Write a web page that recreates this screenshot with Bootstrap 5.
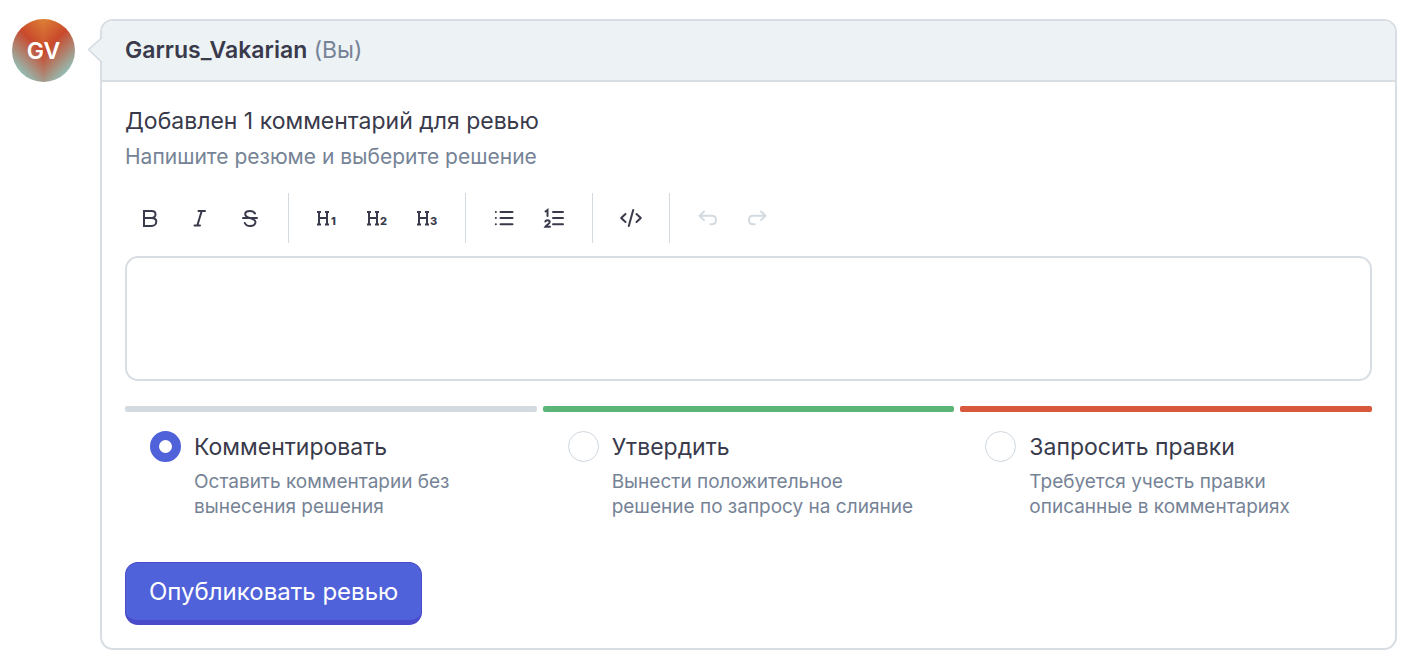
<!DOCTYPE html>
<html lang="ru">
<head>
<meta charset="utf-8">
<meta name="viewport" content="width=device-width, initial-scale=1">
<title>Ревью</title>
<link href="https://cdn.jsdelivr.net/npm/bootstrap@5.3.0/dist/css/bootstrap.min.css" rel="stylesheet">
<style>
  :root { --ink: #393a4b; --muted: #768396; --line: #d3dae0; --edge: #d8dee3; --head: #edf2f5; --accent: #5062d9; --accent-dark: #4a4bcb; }
  body { font-family: Inter, "Open Sans", sans-serif; color: var(--ink); background: #fff; font-size: 23px; line-height: 32px; }
  .review { padding: 19px 11px 16px 12px; gap: 25px; }
  .avatar { width: 63px; height: 63px; font-weight: 600; color: #fff;
    background: linear-gradient(225deg, #dd8136 0%, #c9492c 36%, #8ccfc9 88%) left / 32px 100% no-repeat,
                linear-gradient(135deg, #dd8136 0%, #c9492c 36%, #8ccfc9 88%) right / 32px 100% no-repeat; }
  .review-card { border: 2px solid var(--edge); border-radius: 13px; min-width: 0; }
  .review-head { background: var(--head); border-bottom: 2px solid var(--edge); border-radius: 11px 11px 0 0; padding: 13px 23px 14px; }
  .pointer { left: -15px; top: 16px; }
  .review-body { padding: 23px 23px 23px; }
  .review-title { font-size: inherit; line-height: inherit; }
  .text-quiet { color: var(--muted); }
  .hint { font-size: 21px; line-height: 32px; }
  .tools { margin-top: 20px; margin-bottom: 13px; }
  .tool { width: 50px; height: 50px; color: var(--ink); background: none; border: 0; padding: 0; }
  .tool:disabled { color: var(--line); }
  .tool svg { display: block; margin: 0 auto; }
  .tool-sep { width: 1px; height: 50px; margin: 0 13px; background: var(--line); }
  .tool text { font: 800 11px Inter, sans-serif; fill: currentColor; stroke: none; }
  .editor { height: 125px; border: 2px solid var(--edge); border-radius: 13px; resize: none; }
  .choices { display: grid; grid-template-columns: repeat(3, minmax(0, 1fr)); gap: 6px; margin-top: 25px; }
  .choice { padding: 19px 36px 0 25px; gap: 13px; }
  .bar { height: 6px; border-radius: 2px; }
  .bar-neutral { background: var(--line); }
  .bar-good { background: #5cb578; }
  .bar-bad { background: #d8583c; }
  .choice .form-check-input { width: 31px; height: 31px; margin: 0; border: 1px solid #cfd7df; }
  .choice .form-check-input:checked { background: #fff; border: 9px solid var(--accent); }
  .choice-note { font-size: 19px; line-height: 25px; margin-top: 6px; }
  .publish, .publish:hover { color: #fff; background: var(--accent); border: 1px solid var(--accent-dark); border-bottom-width: 5px; }
  .publish { margin-top: 43px; border-radius: 13px; font-size: 24px; line-height: 32px; padding: 13px 23px 12px; }
</style>
</head>
<body>
<main class="review d-flex align-items-start">
  <div class="avatar rounded-circle flex-shrink-0 d-flex align-items-center justify-content-center">GV</div>
  <form class="review-card flex-grow-1 position-relative">
    <svg class="pointer position-absolute" width="16" height="28" viewBox="0 0 16 28" fill="#edf2f5" stroke="#d3dae0" stroke-width="1.5" aria-hidden="true"><path d="M15 0.500 1.500 12.500 15 25.500"/></svg>
    <header class="review-head"><strong class="fw-semibold">Garrus_Vakarian</strong> <span class="text-quiet">(Вы)</span></header>
    <div class="review-body">
      <h1 class="review-title fw-normal m-0">Добавлен 1 комментарий для ревью</h1>
      <p class="hint text-quiet mb-0 mt-1">Напишите резюме и выберите решение</p>
      <div class="tools d-flex flex-wrap" role="toolbar" aria-label="Форматирование">
        <button class="tool" type="button" aria-label="Полужирный"><svg width="32" height="32" viewBox="0 0 32 32" fill="none" stroke="currentColor" stroke-width="2"><path d="M10 9H17.500C20 9 21.500 10.300 21.500 12.300S20 16 17.500 16H10M17.500 16C20.500 16 22.300 17.200 22.300 19.500S20.500 24 17.500 24H10V8"/></svg></button>
        <button class="tool" type="button" aria-label="Курсив"><svg width="32" height="32" viewBox="0 0 32 32" fill="none" stroke="currentColor" stroke-width="2" stroke-linecap="round"><path d="M14.500 9H21M10.500 23.500h5.500M17.700 9 13.300 23.500"/></svg></button>
        <button class="tool" type="button" aria-label="Зачёркнутый"><svg width="32" height="32" viewBox="0 0 32 32" fill="none" stroke="currentColor" stroke-width="2" stroke-linecap="round"><path d="M21 11.500C20 9.800 18.300 9 16 9c-3 0-4.800 1.300-4.800 3.200 0 2 1.800 3 4.800 3.800 3.500.9 5.500 1.900 5.500 4.100S19.300 24 16.200 24c-2.600 0-4.600-1-5.400-3M9 16h14"/></svg></button>
        <div class="tool-sep"></div>
        <button class="tool" type="button" aria-label="Заголовок 1"><svg width="32" height="32" viewBox="0 0 32 32" fill="none" stroke="currentColor" stroke-width="2"><path d="M8 10v13M16 10v13M8 16h8M6 10h4M14 10h4M6 22.500h4M14 22.500h4"/><text x="20" y="23">1</text></svg></button>
        <button class="tool" type="button" aria-label="Заголовок 2"><svg width="32" height="32" viewBox="0 0 32 32" fill="none" stroke="currentColor" stroke-width="2"><path d="M8 10v13M16 10v13M8 16h8M6 10h4M14 10h4M6 22.500h4M14 22.500h4"/><text x="19" y="23">2</text></svg></button>
        <button class="tool" type="button" aria-label="Заголовок 3"><svg width="32" height="32" viewBox="0 0 32 32" fill="none" stroke="currentColor" stroke-width="2"><path d="M8 10v13M16 10v13M8 16h8M6 10h4M14 10h4M6 22.500h4M14 22.500h4"/><text x="19" y="23">3</text></svg></button>
        <div class="tool-sep"></div>
        <button class="tool" type="button" aria-label="Маркированный список"><svg width="32" height="32" viewBox="0 0 32 32" fill="none" stroke="currentColor" stroke-width="2" stroke-linecap="round"><path d="M12.500 10h12M12.500 16h12M12.500 22.300h12M7.800 10h.1M7.800 16h.1M7.800 22.300h.1"/></svg></button>
        <button class="tool" type="button" aria-label="Нумерованный список"><svg width="32" height="32" viewBox="0 0 32 32" fill="none" stroke="currentColor" stroke-width="2" stroke-linecap="round"><path d="M15 10h10M15 16h10M15 22.300h10"/><path d="M7.500 9.500 9.500 8v6M7.300 19.500c.4-1.500 4.400-1.800 4.400.5 0 1.600-2.700 2.600-4.200 4.700h4.500"/></svg></button>
        <div class="tool-sep"></div>
        <button class="tool" type="button" aria-label="Код"><svg width="32" height="32" viewBox="0 0 32 32" fill="none" stroke="currentColor" stroke-width="2" stroke-linecap="round" stroke-linejoin="round"><path d="m10.500 12-4.300 4 4.300 4M21.500 12l4.300 4-4.300 4M18.200 8l-4.400 16"/></svg></button>
        <div class="tool-sep"></div>
        <button class="tool" type="button" aria-label="Отменить" disabled><svg width="32" height="32" viewBox="0 0 32 32" fill="none" stroke="currentColor" stroke-width="2" stroke-linecap="round" stroke-linejoin="round"><path d="m12 9.500-4.500 4.300 4.500 4.300M7.500 13.800h12.300c2.700 0 4.200 1.700 4.200 4.200s-1.500 4.300-4.200 4.300h-1.500"/></svg></button>
        <button class="tool" type="button" aria-label="Повторить" disabled><svg width="32" height="32" viewBox="0 0 32 32" fill="none" stroke="currentColor" stroke-width="2" stroke-linecap="round" stroke-linejoin="round"><path d="m19 9.500 4.500 4.300-4.500 4.300M23.500 13.800H11.200C8.500 13.800 7 15.500 7 18s1.500 4.300 4.200 4.300h1.500"/></svg></button>
      </div>
      <textarea class="editor form-control shadow-none d-block" aria-label="Резюме ревью"></textarea>
      <div class="choices" role="radiogroup" aria-label="Решение">
        <div>
          <div class="bar bar-neutral"></div>
          <div class="choice d-flex align-items-start">
            <input class="form-check-input flex-shrink-0 shadow-none" type="radio" name="decision" id="comment" aria-describedby="comment-note" checked>
            <div><label class="d-block" for="comment">Комментировать</label><div class="choice-note text-quiet" id="comment-note">Оставить комментарии без вынесения решения</div></div>
          </div>
        </div>
        <div>
          <div class="bar bar-good"></div>
          <div class="choice d-flex align-items-start">
            <input class="form-check-input flex-shrink-0 shadow-none" type="radio" name="decision" id="approve" aria-describedby="approve-note">
            <div><label class="d-block" for="approve">Утвердить</label><div class="choice-note text-quiet" id="approve-note">Вынести положительное решение по запросу на слияние</div></div>
          </div>
        </div>
        <div>
          <div class="bar bar-bad"></div>
          <div class="choice d-flex align-items-start">
            <input class="form-check-input flex-shrink-0 shadow-none" type="radio" name="decision" id="changes" aria-describedby="changes-note">
            <div><label class="d-block" for="changes">Запросить правки</label><div class="choice-note text-quiet" id="changes-note">Требуется учесть правки описанные в комментариях</div></div>
          </div>
        </div>
      </div>
      <button class="publish btn" type="submit">Опубликовать ревью</button>
    </div>
  </form>
</main>
<script src="https://cdn.jsdelivr.net/npm/bootstrap@5.3.0/dist/js/bootstrap.bundle.min.js"></script>
</body>
</html>
